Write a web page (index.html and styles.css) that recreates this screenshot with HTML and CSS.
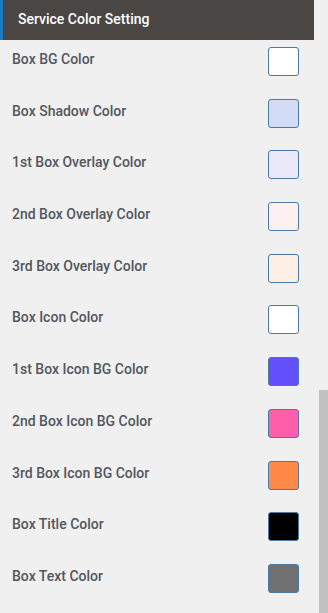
FILE: index.html
```html
<!DOCTYPE html>
<html lang="en">

<head>
    <meta charset="UTF-8">
    <meta name="viewport" content="width=device-width, initial-scale=1.0">
    <title>Service Color Setting</title>
    <link rel="stylesheet" href="styles.css">
</head>

<body>
    <div class="panel">
        <div class="panel-header">Service Color Setting</div>
        <div class="settings">
            <div class="setting"><span class="label">Box BG Color</span><span class="swatch swatch-white"></span></div>
            <div class="setting"><span class="label">Box Shadow Color</span><span class="swatch swatch-shadow"></span></div>
            <div class="setting"><span class="label">1st Box Overlay Color</span><span class="swatch swatch-overlay1"></span></div>
            <div class="setting"><span class="label">2nd Box Overlay Color</span><span class="swatch swatch-overlay2"></span></div>
            <div class="setting"><span class="label">3rd Box Overlay Color</span><span class="swatch swatch-overlay3"></span></div>
            <div class="setting"><span class="label">Box Icon Color</span><span class="swatch swatch-white"></span></div>
            <div class="setting"><span class="label">1st Box Icon BG Color</span><span class="swatch swatch-icon1"></span></div>
            <div class="setting"><span class="label">2nd Box Icon BG Color</span><span class="swatch swatch-icon2"></span></div>
            <div class="setting"><span class="label">3rd Box Icon BG Color</span><span class="swatch swatch-icon3"></span></div>
            <div class="setting"><span class="label">Box Title Color</span><span class="swatch swatch-title"></span></div>
            <div class="setting"><span class="label">Box Text Color</span><span class="swatch swatch-text"></span></div>
        </div>
        <div class="scroll-thumb"></div>
    </div>
</body>

</html>
```

FILE: styles.css
```css
body,
html {
    margin: 0;
    padding: 0;
    height: 100%;
    width: 100%;
    font-family: Roboto, "Liberation Sans", Arial, sans-serif;
    background-color: #f0f0f0;
    overflow: hidden;
}

.panel {
    position: relative;
    height: 100%;
    width: 100%;
}

.panel-header {
    width: 296px;
    height: 40px;
    line-height: 38px;
    padding-left: 15px;
    background-color: #4a4644;
    border-left: 3px solid #1a7bbf;
    color: #ffffff;
    font-size: 14px;
    font-weight: 500;
}

.settings {
    padding: 7px 0 0 12px;
    width: 287px;
}

.setting {
    display: flex;
    align-items: flex-start;
    justify-content: space-between;
    height: 51.7px;
}

.label {
    line-height: 24px;
    font-size: 14px;
    font-weight: 500;
    color: #52575e;
}

.swatch {
    width: 29px;
    height: 27px;
    border: 1.5px solid #4c78a6;
    border-radius: 3px;
}

.swatch-white { background-color: #ffffff; }
.swatch-shadow { background-color: #d3dcf5; }
.swatch-overlay1 { background-color: #ebe8f9; }
.swatch-overlay2 { background-color: #fcf0f0; }
.swatch-overlay3 { background-color: #fcefe3; }
.swatch-icon1 { background-color: #6450fa; }
.swatch-icon2 { background-color: #ff5ea8; }
.swatch-icon3 { background-color: #ff8a48; }
.swatch-title { background-color: #000000; }
.swatch-text { background-color: #717171; }

.scroll-thumb {
    position: absolute;
    right: 0;
    top: 390px;
    bottom: 0;
    width: 9px;
    background-color: #c1c1c1;
}
```
